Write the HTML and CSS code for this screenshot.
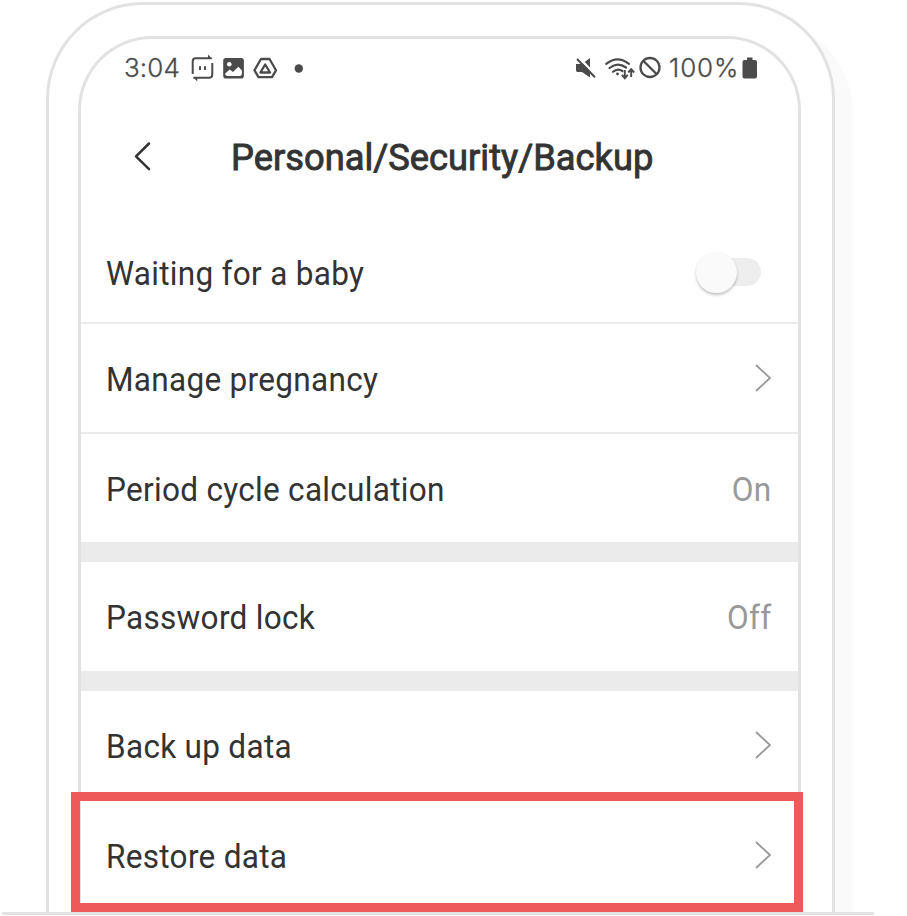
FILE: index.html
```html
<!DOCTYPE html>
<html lang="en">
<head>
<meta charset="utf-8">
<title>Personal/Security/Backup</title>
<link rel="stylesheet" href="styles.css">
</head>
<body>
<main class="stage">
  <div class="phone">
    <div class="screen">
      <div class="status">
        <span class="time">3:04</span>
        <svg class="left-icons" width="118" height="32" viewBox="0 0 118 32" fill="none" stroke="#4b4b4b" stroke-width="2">
          <path d="M2.700 22V9.500Q2.700 6.200 6 6.200H21.500M22.300 11V22.500Q22.300 25.800 19 25.800H3.500"/>
          <path d="M18 2.500 22.300 7H18ZM7.300 29.500 3 25H7.300Z" fill="#4b4b4b" stroke="none"/>
          <path d="M10 14.200v3.800M15 14.200v3.800"/>
          <rect x="33.200" y="6" width="20.700" height="20.500" rx="2.800" fill="#4b4b4b" stroke="none"/>
          <circle cx="39.300" cy="12.300" r="2.300" fill="#fff" stroke="none"/>
          <path d="M35.200 21.500 39.700 17.500 43 20 48.300 14.800 52 18.500V20.500Q52 24 49.500 24H37.500Q35.200 24 35.200 22Z" fill="#fff" stroke="none"/>
          <path stroke-width="2.300" stroke-linejoin="round" d="M71 7H79.500L86 18.300 82 25.200H68.500L64.500 18.300ZM75.200 12.500 80 20.500H70.400Z"/>
          <circle cx="108.800" cy="16.500" r="4.200" fill="#4b4b4b" stroke="none"/>
        </svg>
        <svg class="right-icons" width="90" height="32" viewBox="0 0 90 32" fill="none" stroke="#4b4b4b" stroke-width="2">
          <path fill="#4b4b4b" stroke="none" d="M2 12H8L16 6V25.500L8 20H3.500Q2 20 2 18Z"/>
          <path stroke="#fff" stroke-width="2.500" d="M4.500 5.200 22 23.500"/>
          <path d="M3 7 21 25.200"/>
          <path stroke-width="2.200" stroke-linecap="round" d="M32.200 11.800Q43.500 2.800 55 11.800M35.500 16Q43.500 9.500 52 15.500M39 19.800Q43.500 15.800 48.500 19"/>
          <circle cx="43.500" cy="22" r="1.400" fill="#4b4b4b" stroke="none"/>
          <path stroke-width="1.900" d="M50.800 18V26M47.900 22.900 50.800 26.200 53.700 22.900M57.200 25V17.500M54.300 20.500 57.200 17.200 60.100 20.500"/>
          <circle cx="76" cy="15.500" r="9.500" stroke-width="2.300"/>
          <path stroke-width="2.300" d="M69.500 9 82.500 22"/>
        </svg>
        <span class="percent">100%</span>
        <svg class="battery" width="16" height="32" viewBox="0 0 16 32"><path fill="#4b4b4b" d="M5 5.500H10.500V8H13Q15 8 15 10V24.500Q15 26.500 13 26.500H2.500Q.5 26.500 .5 24.500V10Q.5 8 2.500 8H5Z"/></svg>
      </div>
      <header class="header">
        <svg class="back" width="20" height="32" viewBox="0 0 20 32"><path d="M17 3.500 4 16.400 17 29.200" fill="none" stroke="#333" stroke-width="2.500" stroke-linecap="round" stroke-linejoin="round"/></svg>
        <h1 class="title">Personal/Security/Backup</h1>
      </header>
      <section class="group">
        <div class="row first"><span class="label">Waiting for a baby</span><span class="toggle"><span class="knob"></span></span></div>
        <div class="row"><span class="label">Manage pregnancy</span><svg class="chev" width="18" height="30" viewBox="0 0 18 30"><path d="M2 2 16 15 2 28"/></svg></div>
        <div class="row"><span class="label">Period cycle calculation</span><span class="value">On</span></div>
      </section>
      <section class="group">
        <div class="row"><span class="label">Password lock</span><span class="value">Off</span></div>
      </section>
      <section class="group">
        <div class="row short"><span class="label">Back up data</span><svg class="chev" width="18" height="30" viewBox="0 0 18 30"><path d="M2 2 16 15 2 28"/></svg></div>
        <div class="row"><span class="label">Restore data</span><svg class="chev" width="18" height="30" viewBox="0 0 18 30"><path d="M2 2 16 15 2 28"/></svg></div>
      </section>
    </div>
  </div>
  <div class="highlight"></div>
  <div class="ground"></div>
</main>
</body>
</html>
```
FILE: styles.css
```css
* { box-sizing: border-box; }
body { margin: 0; background: #fff; font-family: Roboto, sans-serif; color: #333; }
.stage { position: relative; width: 907px; height: 916px; overflow: hidden; padding: 2px 0 0 46px; }
.stage::before { content: ""; position: absolute; left: 64px; top: 18px; width: 788.5px; height: 894px; border-radius: 96px 96px 0 0; background: #fafafa; }
.phone { position: relative; width: 789px; height: 910px; border: 3px solid #e2e2e2; border-bottom: 0; border-radius: 97px 97px 0 0; background: #fff; padding: 31px 0 0 29px; }
.screen { width: 723px; height: 876px; border: 3px solid #e2e2e2; border-bottom: 0; border-radius: 74px 74px 0 0; overflow: hidden; }
.status { display: flex; align-items: center; height: 32px; margin-top: 13px; padding-left: 43px; color: #4b4b4b; font-family: Inter, Roboto, sans-serif; font-size: 26px; font-weight: 300; line-height: 32px; -webkit-text-stroke: .3px #4b4b4b; }
.time { width: 66px; letter-spacing: .1px; }
.left-icons { flex: none; }
.right-icons { flex: none; margin-left: 266px; }
.percent { width: 78px; padding-left: 5px; letter-spacing: .9px; }
.battery { flex: none; }
.header { display: flex; align-items: center; height: 138px; padding: 8px 0 0 51px; }
.back { margin-top: -2px; }
.title { margin: 2px 0 0 79px; font-size: 37px; line-height: 44px; font-weight: 400; transform: scaleX(.981); transform-origin: left; white-space: nowrap; -webkit-text-stroke: .9px #333; }
.group + .group { border-top: 20px solid #ebebeb; }
.row { display: flex; align-items: center; justify-content: space-between; height: 109px; padding: 0 26px 0 25px; font-size: 33px; line-height: 40px; letter-spacing: .3px; white-space: nowrap; }
.row + .row { height: 110px; border-top: 2px solid #ebebeb; }
.row.first { height: 100px; }
.row.short { height: 108px; }
.label { padding-top: 3.500px; transform: scaleX(.956); transform-origin: left; }
.value { color: #999; padding-top: 3.500px; transform: scaleX(.956); transform-origin: right; }
.chev { fill: none; stroke: #999; stroke-width: 1.800; }
.toggle { position: relative; width: 54px; height: 28px; margin-right: 11px; border-radius: 14px; background: #eee; }
.knob { position: absolute; left: -11px; top: -6px; width: 41px; height: 41px; border-radius: 50%; background: #fafafa; box-shadow: 0 2px 3px rgba(0,0,0,.24); }
.highlight { position: absolute; left: 71px; top: 792px; width: 732px; height: 120px; border: 9px solid #ee5a5a; }
.ground { position: absolute; left: 2px; top: 912px; width: 872px; height: 3px; background: #e2e2e2; }
```
